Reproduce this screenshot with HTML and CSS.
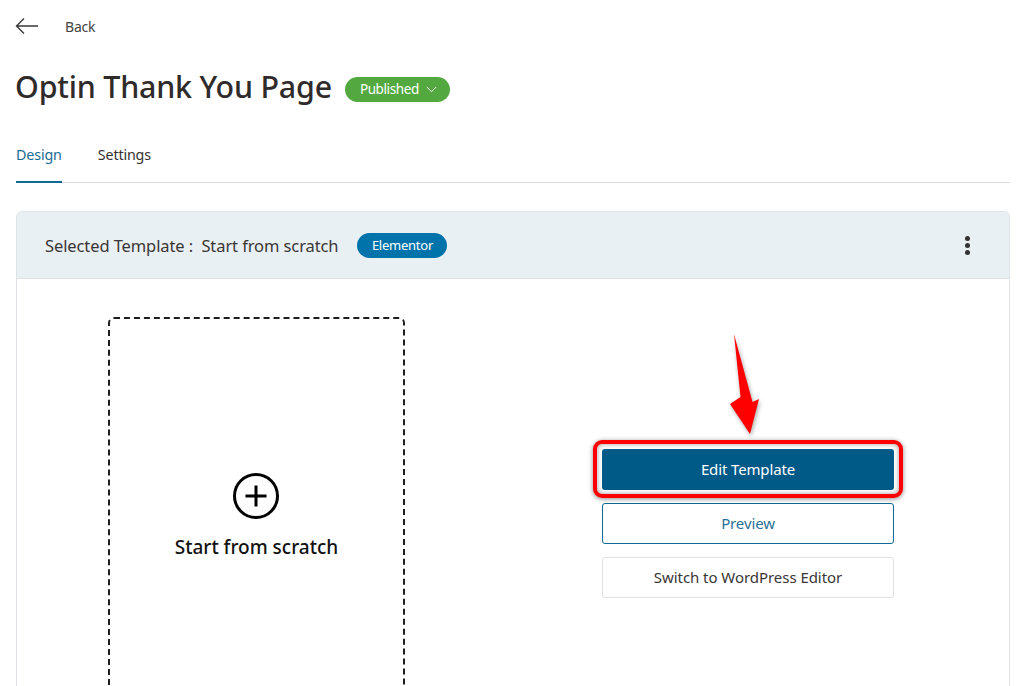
FILE: index.html
```html
<!DOCTYPE html>
<html lang="en">
<head>
<meta charset="utf-8">
<title>Optin Thank You Page</title>
<link rel="stylesheet" href="styles.css">
</head>
<body>
<main class="page">
  <a class="back">
    <svg class="back-icon" width="24" height="18" viewBox="0 0 24 18"><path d="M23 9H1.500M9 1.500 1.500 9 9 16.500" fill="none" stroke="#3a3a3a" stroke-width="1.400"/></svg>
    <span>Back</span>
  </a>
  <div class="title-row">
    <h1 class="title">Optin Thank You Page</h1>
    <span class="status">Published
      <svg width="11" height="7" viewBox="0 0 11 7"><path d="M.8 1 5.500 5.700 10.200 1" fill="none" stroke="#fff" stroke-width="1"/></svg>
    </span>
  </div>
  <nav class="tabs">
    <a class="tab active">Design</a>
    <a class="tab">Settings</a>
  </nav>
  <section class="card">
    <header class="card-head">
      <span class="selected">Selected Template :&nbsp; Start from scratch</span>
      <span class="builder">Elementor</span>
      <span class="kebab"><i></i><i></i><i></i></span>
    </header>
    <div class="card-body">
      <div class="scratch">
        <svg class="plus" width="46" height="46" viewBox="0 0 46 46"><circle cx="23" cy="23" r="21.500" fill="none" stroke="#000" stroke-width="3"/><path d="M23 12.500V33.500M12.500 23H33.500" fill="none" stroke="#000" stroke-width="3"/></svg>
        <span class="scratch-label">Start from scratch</span>
      </div>
      <div class="actions">
        <svg class="arrow" width="44" height="108" viewBox="0 0 44 108"><path d="M8 1 26.500 69 33 66 24 101 4 71 14.500 64Z" fill="#f00"/></svg>
        <div class="edit-wrap">
          <button class="btn primary">Edit Template</button>
          <span class="highlight"></span>
        </div>
        <button class="btn outline">Preview</button>
        <button class="btn plain">Switch to WordPress Editor</button>
      </div>
    </div>
  </section>
</main>
</body>
</html>
```
FILE: styles.css
```css
* { box-sizing: border-box; }
html, body { margin: 0; height: 100%; overflow: hidden; background: #fff; }
body { font-family: "Noto Sans", "Open Sans", sans-serif; color: #353030; }
.page { padding: 0 15px 0 16px; }

.back { display: flex; align-items: center; gap: 26px; height: 18px; margin-top: 17px; font-size: 14px; color: #444; letter-spacing: -.2px; }
.back-icon { margin-left: -1px; }

.title-row { display: flex; align-items: center; gap: 13px; margin-top: 29px; height: 46px; }
.title { margin: 0 0 0 -1px; font-size: 30.400px; font-weight: 500; line-height: 46px; letter-spacing: -.2px; color: #2f2b2b; }
.status { display: flex; align-items: center; gap: 7px; height: 25px; padding: 0 13px 0 15px; margin-top: 4px; border-radius: 13px; background: #53a93f; color: #fff; font-size: 13.500px; letter-spacing: -.4px; }

.tabs { display: flex; gap: 36px; margin-top: 24px; height: 49px; border-bottom: 1px solid #dcdcde; }
.tab { display: block; height: 49px; padding-top: 9px; font-size: 14.300px; line-height: 24px; letter-spacing: -.15px; }
.tab.active { color: #1a6c95; border-bottom: 2px solid #0f6a94; }

.card { margin-top: 28px; height: 500px; border: 1px solid #dfe3e8; border-bottom: 0; border-radius: 6px 6px 0 0; overflow: hidden; }
.card-head { display: flex; align-items: center; height: 67px; padding: 0 39px 0 28px; background: #e9f0f4; border-bottom: 1px solid #dfe3e8; }
.selected { font-size: 16.500px; font-weight: 400; letter-spacing: -.1px; color: #3a3636; }
.builder { display: flex; align-items: center; justify-content: center; height: 25px; width: 90px; margin-left: 19px; border-radius: 13px; background: #0073aa; color: #fff; font-size: 13px; letter-spacing: -.25px; }
.kebab { display: flex; flex-direction: column; gap: 2px; margin-left: auto; }
.kebab i { display: block; width: 5px; height: 5px; border-radius: 50%; background: #333; }

.card-body { display: flex; padding: 38px 0 0 91px; }
.scratch { display: flex; flex-direction: column; align-items: center; width: 297px; height: 420px; padding-top: 154px; border: 2px dashed #1e1e1e; border-radius: 6px; }
.plus { display: block; margin-left: -2px; }
.scratch-label { margin-top: 15px; font-size: 19px; font-weight: 500; line-height: 26px; letter-spacing: 0; color: #111; }

.actions { position: relative; display: flex; flex-direction: column; gap: 13px; width: 292px; margin-left: 197px; padding-top: 132px; }
.arrow { position: absolute; left: 124px; top: 16px; filter: drop-shadow(1px 2px 2px rgba(0,0,0,.35)); }
.edit-wrap { position: relative; display: block; height: 41px; }
.btn { display: block; width: 100%; height: 41px; border-radius: 3px; font-family: inherit; font-size: 15px; letter-spacing: -.13px; background: #fff; padding: 0 0 2px; }
.primary { background: #005a87; color: #fff; border: 0; }
.outline { border: 1px solid #0f6a94; color: #2a6f99; }
.plain { border: 1px solid #dfe1e4; color: #3a3636; letter-spacing: -.05px; }
.highlight { position: absolute; inset: -9px -9px -8px; border: 4px solid #f00; border-radius: 9px; box-shadow: 0 1px 5px rgba(0,0,0,.45), inset 0 0 5px rgba(0,0,0,.4); pointer-events: none; }
```
